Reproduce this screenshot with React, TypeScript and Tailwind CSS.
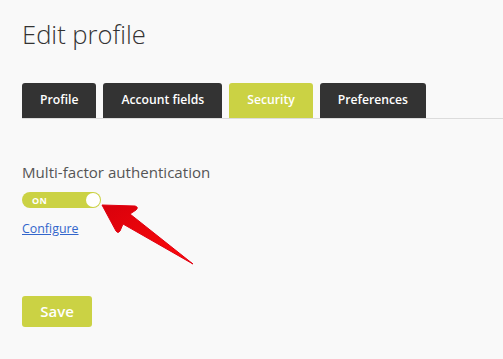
import React, { useState } from 'react';

const TABS = ['Profile', 'Account fields', 'Security', 'Preferences'];

const Arrow: React.FC = () => (
  <svg className="absolute left-0 top-0 pointer-events-none" width="503" height="359" viewBox="0 0 503 359">
    <defs>
      <linearGradient id="ag" x1="0" y1="0" x2="1" y2="1">
        <stop offset="0" stopColor="#d8000c" />
        <stop offset="1" stopColor="#ff0a0a" />
      </linearGradient>
    </defs>
    <path
      d="M102 205 L135 206 Q139 207 136 210 L130 214 L193 264 L123 224 L120 231 Q118 234 116 231 Z"
      fill="url(#ag)"
      stroke="#e00010"
      strokeWidth="1"
      strokeLinejoin="round"
    />
  </svg>
);

export default function App() {
  const [active, setActive] = useState('Security');
  const [mfa, setMfa] = useState(true);

  return (
    <div
      className="relative w-[503px] h-[359px] overflow-hidden bg-[#f9f9f9] text-[#333]"
      style={{ fontFamily: '"Open Sans", "Noto Sans", sans-serif' }}
    >
      <div className="pl-[22px] pt-[18px]">
        <h1 className="text-[25.6px] font-light leading-[34px] text-[#333]">Edit profile</h1>

        {/* Tabs */}
        <div className="mt-[31px] flex gap-[7px] border-b border-[#dcdcdc] h-[36px] items-end">
          {TABS.map(t => (
            <button
              key={t}
              onClick={() => setActive(t)}
              className={`h-[35px] px-[18px] rounded-t-[3px] text-[12.2px] font-semibold text-white ${
                active === t ? 'bg-[#cbd244]' : 'bg-[#333333]'
              }`}
            >
              {t}
            </button>
          ))}
        </div>

        {/* Security */}
        <p className="mt-[42px] text-[15.1px] leading-[22px] text-[#555]">Multi-factor authentication</p>
        <button
          onClick={() => setMfa(!mfa)}
          className={`relative mt-[9px] flex items-center w-[79px] h-[16px] rounded-full ${mfa ? 'bg-[#cbd244]' : 'bg-[#aaa]'}`}
        >
          <span className="pl-[10px] text-[9px] font-bold text-white leading-none tracking-[0.3px]">ON</span>
          <span className="absolute right-[1.5px] top-[1px] w-[14px] h-[14px] rounded-full bg-white" />
        </button>
        <a href="#" className="block mt-[12px] text-[12.4px] leading-[18px] text-[#3366cc] underline w-fit">
          Configure
        </a>

        <button className="mt-[58px] w-[70px] h-[31px] rounded-[3px] bg-[#cbd244] text-white text-[15px] font-semibold">
          Save
        </button>
      </div>
      <Arrow />
    </div>
  );
}
